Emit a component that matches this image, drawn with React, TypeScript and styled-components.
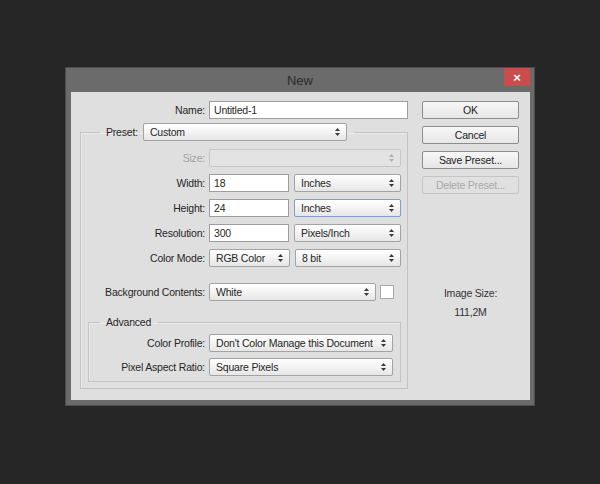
import React from 'react';
import styled, { createGlobalStyle } from 'styled-components';

const GlobalStyle = createGlobalStyle`
  html, body {
    margin: 0;
    padding: 0;
    background: #262626;
  }
  body {
    font-family: 'Liberation Sans', Arial, sans-serif;
    font-size: 10.5px;
    letter-spacing: -0.2px;
    color: #262626;
  }
`;

const Stage = styled.div`
  width: 600px;
  height: 484px;
  padding: 67px 0 0 65px;
  box-sizing: border-box;
`;

const Dialog = styled.div`
  width: 470px;
  height: 339px;
  box-sizing: border-box;
  background: #6b6b6b;
  border: 1px solid #4c4c4c;
  display: flex;
  flex-direction: column;
`;

const TitleBar = styled.div`
  height: 24px;
  flex: none;
  display: grid;
  grid-template-columns: 1fr auto 1fr;
`;

const Title = styled.div`
  grid-column: 2;
  align-self: center;
  font-size: 13px;
  letter-spacing: 0;
  color: #2c2c2c;
  padding-top: 1px;
`;

const CloseButton = styled.div`
  grid-column: 3;
  justify-self: end;
  width: 26px;
  height: 18px;
  margin-right: 4px;
  background: #c94d4d;
  color: #fff;
  font-size: 13px;
  font-weight: 700;
  display: flex;
  align-items: center;
  justify-content: center;
`;

const Panel = styled.div`
  flex: 1;
  margin: 0 4px 5px 5px;
  padding: 9px 0 0 9px;
  background: #dfdfdf;
  display: flex;
  align-items: flex-start;
`;

const FormCol = styled.div`
  width: 328px;
  display: flex;
  flex-direction: column;
`;

const ButtonCol = styled.div`
  width: 97px;
  margin-left: 14px;
  display: flex;
  flex-direction: column;
  gap: 7px;
`;

const Row = styled.div<{ $label: number; $mt?: number }>`
  display: grid;
  grid-template-columns: ${p => p.$label}px auto;
  column-gap: 4px;
  align-items: center;
  margin-top: ${p => p.$mt ?? 0}px;
`;

const Label = styled.span<{ $disabled?: boolean }>`
  text-align: right;
  white-space: nowrap;
  color: ${p => (p.$disabled ? '#a3a3a3' : '#262626')};
`;

const Controls = styled.div`
  display: flex;
  align-items: center;
  gap: 5px;
`;

const TextInput = styled.div<{ $w: number }>`
  width: ${p => p.$w}px;
  height: 18px;
  box-sizing: border-box;
  border: 1px solid #9d9d9d;
  background: #fff;
  padding: 0 4px;
  display: flex;
  align-items: center;
  white-space: nowrap;
`;

const SelectBox = styled.div<{ $w: number; $focus?: boolean; $disabled?: boolean }>`
  width: ${p => p.$w}px;
  height: 18px;
  box-sizing: border-box;
  border: 1px solid ${p => (p.$focus ? '#7f9fcc' : p.$disabled ? '#c6c6c6' : '#a3a3a3')};
  border-radius: 2px;
  background: ${p =>
    p.$disabled ? '#e3e3e3' : 'linear-gradient(#ffffff, #f3f3f3 50%, #e6e6e6)'};
  padding: 0 6px 0 6px;
  display: flex;
  align-items: center;
  justify-content: space-between;
  white-space: nowrap;
  color: ${p => (p.$disabled ? '#a3a3a3' : '#262626')};
`;

const Arrows = ({ dim }: { dim?: boolean }) => (
  <svg width="5" height="8" viewBox="0 0 5 8">
    <polygon points="0,3 2.5,0 5,3" fill={dim ? '#b0b0b0' : '#3a3a3a'} />
    <polygon points="0,5 2.5,8 5,5" fill={dim ? '#b0b0b0' : '#3a3a3a'} />
  </svg>
);

const Select = ({
  w,
  value,
  focus,
  disabled,
}: {
  w: number;
  value: string;
  focus?: boolean;
  disabled?: boolean;
}) => (
  <SelectBox $w={w} $focus={focus} $disabled={disabled}>
    <span>{value}</span>
    <Arrows dim={disabled} />
  </SelectBox>
);

const Swatch = styled.div`
  width: 14px;
  height: 14px;
  box-sizing: border-box;
  border: 1px solid #a8a8a8;
  background: #fff;
  margin-left: -1px;
`;

const Group = styled.fieldset<{ $m: string; $pb: number }>`
  margin: ${p => p.$m};
  padding: 0 0 ${p => p.$pb}px 0;
  border: 1px solid #c3c3c3;
  box-shadow: inset 1px 1px 0 #ececec;
  min-width: 0;
`;

const Legend = styled.legend<{ $ml: number }>`
  margin-left: ${p => p.$ml}px;
  padding: 0 7px 0 6px;
`;

const LegendInner = styled.span`
  display: inline-flex;
  align-items: center;
  gap: 5px;
`;

const LegendText = styled.span`
  display: block;
  line-height: 14px;
`;

const GroupBody = styled.div<{ $pt: number }>`
  padding-top: ${p => p.$pt}px;
`;

const Button = styled.div<{ $disabled?: boolean }>`
  height: 18px;
  box-sizing: border-box;
  border: 1px solid ${p => (p.$disabled ? '#c4c4c4' : '#8d8d8d')};
  border-radius: 2px;
  background: ${p => (p.$disabled ? '#e0e0e0' : 'linear-gradient(#f7f7f7, #e6e6e6)')};
  color: ${p => (p.$disabled ? '#a9a9a9' : '#222')};
  display: flex;
  align-items: center;
  justify-content: center;
  white-space: nowrap;
`;

const ImageSize = styled.div`
  margin-top: 83px;
  text-align: center;
  line-height: 19px;
  color: #333;
`;

export default function App() {
  return (
    <Stage>
      <GlobalStyle />
      <Dialog>
        <TitleBar>
          <Title>New</Title>
          <CloseButton>×</CloseButton>
        </TitleBar>
        <Panel>
          <FormCol>
            <Row $label={125}>
              <Label>Name:</Label>
              <TextInput $w={199}>Untitled-1</TextInput>
            </Row>

            <Group $m="4px 0 0 0" $pb={0}>
              <Legend $ml={19}>
                <LegendInner>
                  <span>Preset:</span>
                  <Select w={204} value="Custom" />
                </LegendInner>
              </Legend>
              <GroupBody $pt={8}>
                <Row $label={124}>
                  <Label $disabled>Size:</Label>
                  <Select w={192} value="" disabled />
                </Row>
                <Row $label={124} $mt={7}>
                  <Label>Width:</Label>
                  <Controls>
                    <TextInput $w={80}>18</TextInput>
                    <Select w={107} value="Inches" />
                  </Controls>
                </Row>
                <Row $label={124} $mt={7}>
                  <Label>Height:</Label>
                  <Controls>
                    <TextInput $w={80}>24</TextInput>
                    <Select w={107} value="Inches" focus />
                  </Controls>
                </Row>
                <Row $label={124} $mt={7}>
                  <Label>Resolution:</Label>
                  <Controls>
                    <TextInput $w={80}>300</TextInput>
                    <Select w={107} value="Pixels/Inch" />
                  </Controls>
                </Row>
                <Row $label={124} $mt={7}>
                  <Label>Color Mode:</Label>
                  <Controls>
                    <Select w={81} value="RGB Color" />
                    <Select w={106} value="8 bit" />
                  </Controls>
                </Row>
                <Row $label={124} $mt={16}>
                  <Label>Background Contents:</Label>
                  <Controls>
                    <Select w={167} value="White" />
                    <Swatch />
                  </Controls>
                </Row>

                <Group $m="14px 6px 6px 7px" $pb={5}>
                  <Legend $ml={11}>
                    <LegendText>Advanced</LegendText>
                  </Legend>
                  <GroupBody $pt={5}>
                    <Row $label={116}>
                      <Label>Color Profile:</Label>
                      <Select w={184} value="Don't Color Manage this Document" />
                    </Row>
                    <Row $label={116} $mt={6}>
                      <Label>Pixel Aspect Ratio:</Label>
                      <Select w={184} value="Square Pixels" />
                    </Row>
                  </GroupBody>
                </Group>
              </GroupBody>
            </Group>
          </FormCol>

          <ButtonCol>
            <Button>OK</Button>
            <Button>Cancel</Button>
            <Button>Save Preset...</Button>
            <Button $disabled>Delete Preset...</Button>
            <ImageSize>
              Image Size:
              <br />
              111,2M
            </ImageSize>
          </ButtonCol>
        </Panel>
      </Dialog>
    </Stage>
  );
}
